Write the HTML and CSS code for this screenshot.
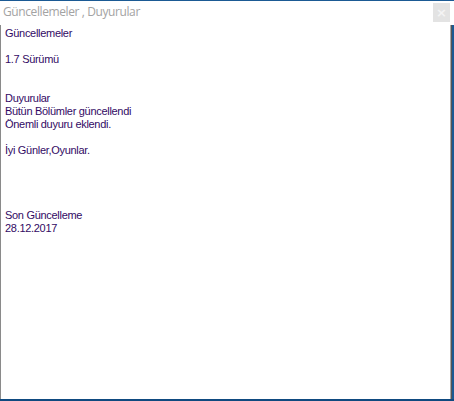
FILE: index.html
```html
<!DOCTYPE html>
<html>
<head>
<meta charset="utf-8">
<link rel="stylesheet" href="styles.css">
</head>
<body>
<div class="window">
  <div class="titlebar">
    <span class="title">Güncellemeler , Duyurular</span>
    <span class="close">×</span>
  </div>
  <div class="content">
    <div class="text">
      <div class="line">Güncellemeler</div>
      <div class="line">&nbsp;</div>
      <div class="line">1.7 Sürümü</div>
      <div class="line">&nbsp;</div>
      <div class="line">&nbsp;</div>
      <div class="line">Duyurular</div>
      <div class="line">Bütün Bölümler güncellendi</div>
      <div class="line">Önemli duyuru eklendi.</div>
      <div class="line">&nbsp;</div>
      <div class="line">İyi Günler,Oyunlar.</div>
      <div class="line">&nbsp;</div>
      <div class="line">&nbsp;</div>
      <div class="line">&nbsp;</div>
      <div class="line">&nbsp;</div>
      <div class="line">Son Güncelleme</div>
      <div class="line">28.12.2017</div>
    </div>
    <div class="edge"></div>
  </div>
</div>
</body>
</html>
```
FILE: styles.css
```css
html, body {
  margin: 0;
  padding: 0;
  background: #ffffff;
}
.window {
  width: 454px;
  height: 401px;
  box-sizing: border-box;
  border-top: 1px solid #1b5a94;
  border-bottom: 2px solid #0f4a80;
  display: flex;
  flex-direction: column;
  background: #ffffff;
}
.titlebar {
  height: 24px;
  display: flex;
  align-items: flex-start;
  justify-content: space-between;
  padding: 0 4px 0 3px;
}
.title {
  font-family: "Open Sans", "Noto Sans", sans-serif;
  font-size: 12px;
  color: #a3a3a3;
  line-height: 20px;
  padding-top: 1px;
  letter-spacing: -0.4px;
}
.close {
  width: 17px;
  height: 19px;
  margin-top: 2px;
  background: #e3e3e3;
  color: #f4f4f4;
  font-family: "DejaVu Sans", sans-serif;
  font-size: 13px;
  font-weight: bold;
  display: flex;
  align-items: center;
  justify-content: center;
}
.content {
  flex: 1;
  display: flex;
  border-left: 1px solid #8a8a8a;
}
.text {
  flex: 1;
  padding: 2px 0 0 4px;
  font-family: "Liberation Sans", Arial, sans-serif;
  font-size: 11px;
  line-height: 13px;
  letter-spacing: -0.3px;
  color: #320a64;
}
.edge {
  width: 3px;
  border-left: 1px solid #a8a8a8;
  background: linear-gradient(to right, #555555 0, #555555 1px, #1b5a94 1px);
}
```
